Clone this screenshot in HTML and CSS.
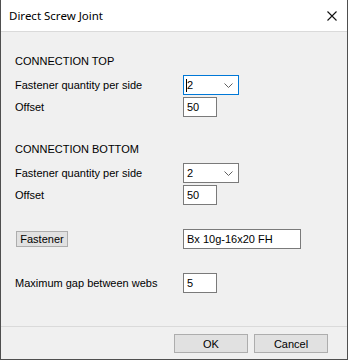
FILE: index.html
```html
<!DOCTYPE html>
<html lang="en">
<head>
  <meta charset="UTF-8" />
  <meta name="viewport" content="width=device-width, initial-scale=1.0"/>
  <title>Direct Screw Joint</title>
  <link rel="stylesheet" href="styles.css">
</head>
<body>
  <div class="window">
    <div class="titlebar">
      <span class="title">Direct Screw Joint</span>
      <svg class="close" width="10" height="10" viewBox="0 0 10 10">
        <path d="M0.5 0.5 L9.5 9.5 M9.5 0.5 L0.5 9.5" stroke="#111" stroke-width="1.1" fill="none"/>
      </svg>
    </div>

    <div class="content">
      <div class="group">
        <div class="heading">CONNECTION TOP</div>
        <div class="fields">
          <span class="label">Fastener quantity per side</span>
          <div class="combo focused">
            <span class="value"><span class="caret"></span>2</span>
            <svg class="chevron" width="9" height="5" viewBox="0 0 9 5"><path d="M0.5 0.5 L4.5 4.5 L8.5 0.5" stroke="#606060" fill="none"/></svg>
          </div>
          <span class="label">Offset</span>
          <input class="field" type="text" value="50" />
        </div>
      </div>

      <div class="group">
        <div class="heading">CONNECTION BOTTOM</div>
        <div class="fields">
          <span class="label">Fastener quantity per side</span>
          <div class="combo">
            <span class="value">2</span>
            <svg class="chevron" width="9" height="5" viewBox="0 0 9 5"><path d="M0.5 0.5 L4.5 4.5 L8.5 0.5" stroke="#606060" fill="none"/></svg>
          </div>
          <span class="label">Offset</span>
          <input class="field" type="text" value="50" />
        </div>
      </div>

      <div class="fields spaced">
        <span><button class="btn-small">Fastener</button></span>
        <input class="field wide" type="text" value="Bx 10g-16x20 FH" />
      </div>

      <div class="fields spaced">
        <span class="label">Maximum gap between webs</span>
        <input class="field" type="text" value="5" />
      </div>
    </div>

    <div class="footer">
      <button class="btn">OK</button>
      <button class="btn">Cancel</button>
    </div>
  </div>
</body>
</html>
```

FILE: styles.css
```css
body {
    margin: 0;
    font-family: "Liberation Sans", Arial, sans-serif;
    font-size: 11px;
    color: #000;
    background: #fff;
}

.window {
    width: 348px;
    height: 360px;
    box-sizing: border-box;
    border: 1px solid #4f4f4f;
    border-top: none;
    background: #f0f0f0;
    display: flex;
    flex-direction: column;
}

.titlebar {
    height: 31px;
    flex-shrink: 0;
    background: #fff;
    border-bottom: 1px solid #dadada;
    display: flex;
    align-items: center;
    justify-content: space-between;
    padding: 0 10px 0 8px;
}

.title {
    font-family: "Noto Sans", "Open Sans", sans-serif;
    font-size: 11.5px;
    color: #000;
}

.close {
    display: block;
    margin-top: 1px;
}

.content {
    flex: 1;
    padding: 23px 0 0 14px;
}

.group + .group {
    margin-top: 26px;
}

.heading {
    line-height: 13px;
    margin-bottom: 7px;
}

.fields {
    display: grid;
    grid-template-columns: 168px max-content;
    grid-auto-rows: 20px;
    row-gap: 2px;
    align-items: center;
}

.fields.spaced {
    margin-top: 24px;
}

.label {
    line-height: 13px;
}

.combo {
    width: 56px;
    height: 20px;
    box-sizing: border-box;
    border: 1px solid #7a7a7a;
    background: #fff;
    display: flex;
    align-items: center;
    justify-content: space-between;
    padding: 0 5px 0 3px;
}

.combo.focused {
    border-color: #0078d7;
}

.combo .value {
    display: flex;
    align-items: center;
}

.caret {
    width: 1px;
    height: 13px;
    background: #000;
    margin-left: -1px;
}

.chevron {
    display: block;
    margin-top: 1px;
}

.field {
    width: 34px;
    height: 20px;
    box-sizing: border-box;
    border: 1px solid #7a7a7a;
    background: #fff;
    padding: 0 3px;
    margin: 0;
    font: inherit;
    color: #000;
    outline: none;
}

.field.wide {
    width: 118px;
}

.btn-small {
    display: block;
    margin-left: 1px;
    width: 52px;
    height: 16px;
    padding: 0;
    border: 1px solid #adadad;
    background: #e1e1e1;
    font: inherit;
    color: #000;
}

.footer {
    flex-shrink: 0;
    border-top: 1px solid #dadada;
    display: flex;
    justify-content: flex-end;
    gap: 6px;
    padding: 7px 19px 6px 0;
}

.btn {
    width: 74px;
    height: 19px;
    padding: 0;
    border: 1px solid #adadad;
    background: #e1e1e1;
    font: inherit;
    color: #000;
}
```
